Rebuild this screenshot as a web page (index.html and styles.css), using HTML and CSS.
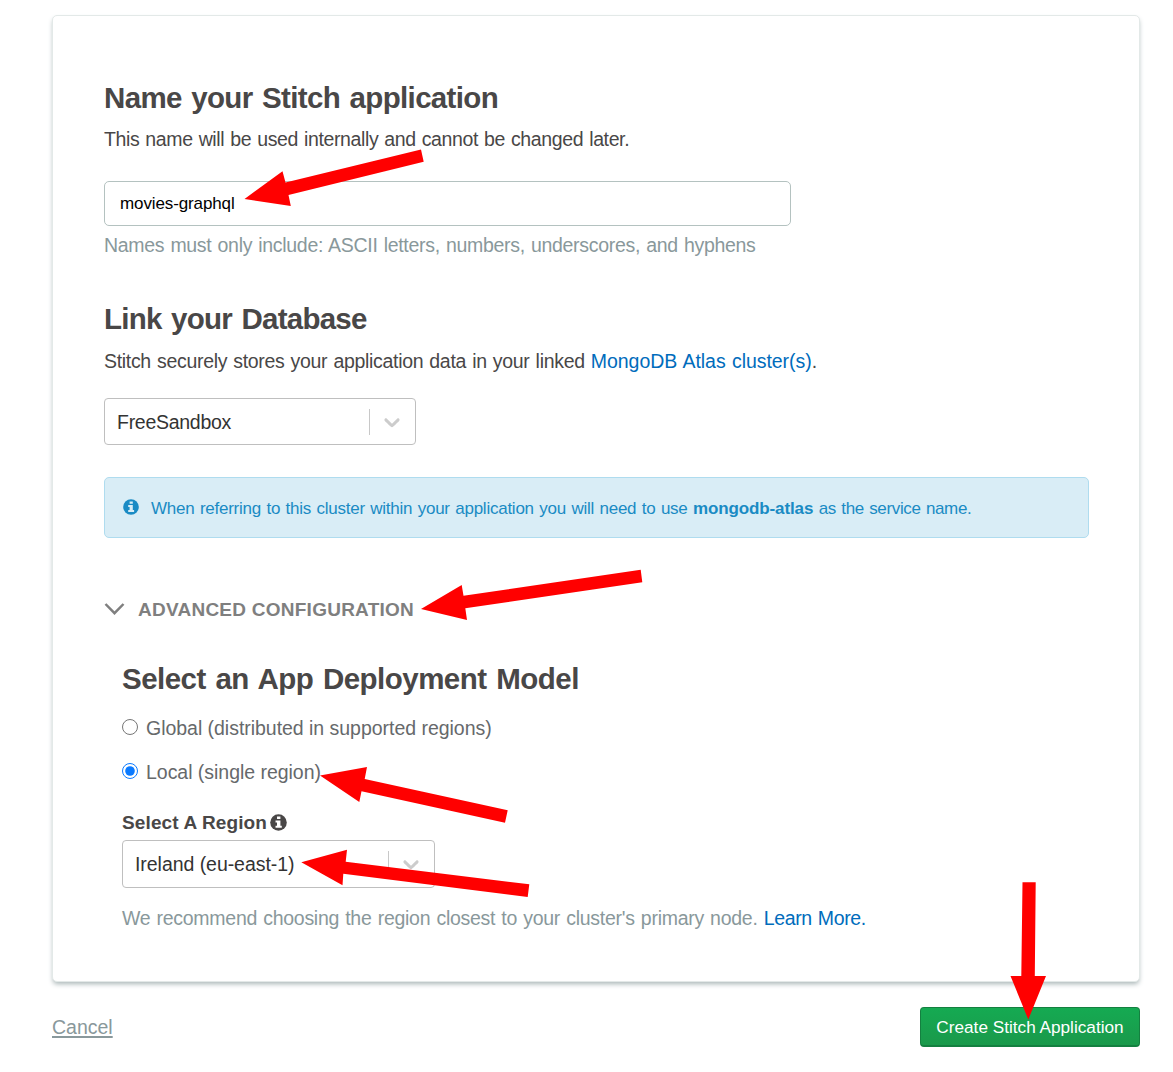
FILE: index.html
```html
<!DOCTYPE html>
<html lang="en">
<head>
<meta charset="utf-8">
<title>Create Stitch Application</title>
<link rel="stylesheet" href="styles.css">
</head>
<body>
<main class="page">
  <form class="card">
    <section class="name-section">
      <h1 class="heading heading-name">Name your Stitch application</h1>
      <p class="lead lead-name">This name will be used internally and cannot be changed later.</p>
      <input class="name-input" type="text" value="movies-graphql" aria-label="Application name">
      <p class="hint">Names must only include: ASCII letters, numbers, underscores, and hyphens</p>
    </section>

    <section class="link-section">
      <h2 class="heading heading-link">Link your Database</h2>
      <p class="lead lead-link">Stitch securely stores your application data in your linked <a class="link atlas-link">MongoDB Atlas cluster(s)</a>.</p>
      <div class="select">
        <span class="select-value cluster-value">FreeSandbox</span>
        <span class="select-divider"></span>
        <svg class="select-arrow" width="26" height="26" viewBox="0 0 20 20"><path d="M4.516 7.548c0.436-0.446 1.043-0.481 1.576 0l3.908 3.747 3.908-3.747c0.533-0.481 1.141-0.446 1.574 0 0.436 0.445 0.408 1.197 0 1.615-0.406 0.418-4.695 4.502-4.695 4.502-0.217 0.223-0.502 0.335-0.787 0.335s-0.57-0.112-0.789-0.335c0 0-4.287-4.084-4.695-4.502s-0.436-1.17 0-1.615z"/></svg>
      </div>
      <div class="alert">
        <svg class="info-icon alert-icon" width="16" height="16" viewBox="0 0 16 16"><circle cx="8" cy="8" r="7.8" fill="currentColor"/><path fill="#d9edf6" d="M6.6 2.4h3.2v2.3H6.6zM5.2 6h4.6v5h1.3v2H5.2v-2h1.4V8H5.2z"/></svg>
        <p class="alert-text">When referring to this cluster within your application you will need to use <strong>mongodb-atlas</strong> <span class="alert-tail">as the service name.</span></p>
      </div>
    </section>

    <div class="advanced-toggle">
      <svg width="21" height="14" viewBox="0 0 21 14"><path d="M1.5 2 10.5 11.2 19.5 2" fill="none" stroke="#7f7f7f" stroke-width="2.5"/></svg>
      <span class="advanced-title">ADVANCED CONFIGURATION</span>
    </div>

    <section class="advanced">
      <h2 class="heading heading-model">Select an App Deployment Model</h2>
      <label class="option"><input class="radio" type="radio" name="model"><span>Global (distributed in supported regions)</span></label>
      <label class="option"><input class="radio" type="radio" name="model" checked><span>Local (single region)</span></label>
      <div class="region-label"><span class="region-title">Select A Region</span>
        <svg class="info-icon" width="17" height="17" viewBox="0 0 16 16"><circle cx="8" cy="8" r="7.8" fill="currentColor"/><path fill="#fff" d="M6.6 2.4h3.2v2.3H6.6zM5.2 6h4.6v5h1.3v2H5.2v-2h1.4V8H5.2z"/></svg>
      </div>
      <div class="select region-select">
        <span class="select-value">Ireland (eu-east-1)</span>
        <span class="select-divider"></span>
        <svg class="select-arrow" width="26" height="26" viewBox="0 0 20 20"><path d="M4.516 7.548c0.436-0.446 1.043-0.481 1.576 0l3.908 3.747 3.908-3.747c0.533-0.481 1.141-0.446 1.574 0 0.436 0.445 0.408 1.197 0 1.615-0.406 0.418-4.695 4.502-4.695 4.502-0.217 0.223-0.502 0.335-0.787 0.335s-0.57-0.112-0.789-0.335c0 0-4.287-4.084-4.695-4.502s-0.436-1.17 0-1.615z"/></svg>
      </div>
      <p class="recommend">We recommend choosing the region closest to your cluster's primary node. <a class="link learn-link">Learn More.</a></p>
    </section>
  </form>

  <footer class="actions">
    <a class="cancel">Cancel</a>
    <button class="create" type="button">Create Stitch Application</button>
  </footer>
</main>

<svg class="arrows" width="1173" height="1072" viewBox="0 0 1173 1072" fill="#f00">
  <path d="M244.5 199 282.5 171.3 285.5 182.5 421 149.5 423.7 161.7 288.5 195 290.8 206z"/>
  <path d="M421 609 461.7 585 463.5 595.7 640.7 569.7 642.3 582.3 465.3 608.3 467 620z"/>
  <path d="M320 775.5 367 767 364.7 779 507.7 810.3 505 822.7 361.5 791.3 359.3 802z"/>
  <path d="M301.3 862.3 347 849.7 345.7 861.7 529.3 884.3 527.7 897 343.3 873.7 342.5 885.3z"/>
  <path d="M1028.3 1019.5 1010.5 976H1021.3L1022.5 882.3H1035.7L1034.8 976H1046z"/>
</svg>
</body>
</html>
```

FILE: styles.css
```css
* {
  box-sizing: border-box;
}

body {
  margin: 0;
  background: #fff;
  color: #494747;
  font-family: "Liberation Sans", Arial, sans-serif;
  font-size: 19.5px;
  line-height: 28px;
}

h1, h2, p {
  margin: 0;
}

p {
  word-spacing: 1px;
}

.page {
  height: 1072px;
  padding: 15px 33px 0 52px;
  overflow: hidden;
}

.card {
  height: 967px;
  padding: 62px 50px 0 51px;
  border: 1px solid #e3e9e8;
  border-radius: 5px;
  background: #fff;
  box-shadow: 0 3px 5px -1px #a9b6b7;
}

.heading {
  font-size: 29.5px;
  font-weight: 700;
  line-height: 40px;
  word-spacing: 2px;
}

.heading-name { letter-spacing: -0.66px; }
.heading-link { letter-spacing: -0.75px; }
.heading-model { letter-spacing: -0.52px; }

.lead-name {
  margin-top: 7px;
  letter-spacing: -0.38px;
}

.name-input {
  display: block;
  width: 687px;
  height: 45px;
  margin-top: 28px;
  padding: 1px 15px 0;
  border: 1px solid #b4c2c0;
  border-radius: 5px;
  color: #000;
  background: #fff;
  font: 17px "Liberation Sans", Arial, sans-serif;
  letter-spacing: -0.12px;
}

.hint {
  margin-top: 5px;
  color: #89989b;
  letter-spacing: -0.3px;
}

.link-section {
  margin-top: 40px;
}

.lead-link {
  margin-top: 8px;
  letter-spacing: -0.31px;
}

.link {
  color: #006cbc;
}

.atlas-link {
  letter-spacing: -0.05px;
}

.select {
  display: flex;
  align-items: center;
  width: 312px;
  height: 47px;
  margin-top: 23px;
  padding: 0 10px 0 12px;
  border: 1px solid #bfbfbf;
  border-radius: 4px;
  background: #fff;
  color: #333;
}

.select-value {
  flex: 1;
  letter-spacing: -0.05px;
}

.cluster-value {
  letter-spacing: -0.28px;
}

.select-divider {
  width: 1px;
  height: 26px;
  margin-right: 9px;
  background: #c8c8c8;
}

.select-arrow {
  fill: #ccc;
}

.alert {
  display: flex;
  align-items: center;
  height: 61px;
  margin-top: 32px;
  padding: 0 18px;
  border: 1px solid #afdcef;
  border-radius: 5px;
  background: #d9edf6;
  color: #1a8bc4;
}

.info-icon {
  display: block;
  flex: none;
}

.alert-icon {
  margin-bottom: 2px;
}

.alert-text {
  margin: 2px 0 0 12px;
  font-size: 17px;
  letter-spacing: -0.25px;
  white-space: nowrap;
}

.alert-text strong {
  letter-spacing: -0.13px;
}

.alert-tail {
  letter-spacing: -0.36px;
}

.advanced-toggle {
  display: flex;
  align-items: center;
  gap: 13px;
  margin-top: 57px;
  color: #7f7f7f;
  font-size: 19px;
  font-weight: 700;
  letter-spacing: 0.25px;
}

.advanced-title,
.region-title {
  padding-top: 2px;
  line-height: 26px;
}

.advanced {
  margin-top: 36px;
  padding-left: 18px;
}

.option {
  display: flex;
  align-items: center;
  gap: 8px;
  margin-top: 16px;
  color: #66696b;
  letter-spacing: -0.03px;
}

.heading-model + .option {
  margin-top: 15px;
}

.radio {
  width: 16px;
  height: 16px;
  margin: 0 0 2px;
  accent-color: #0a7aff;
}

.region-label {
  display: flex;
  align-items: center;
  gap: 3px;
  margin-top: 22px;
  font-size: 19px;
  font-weight: 700;
  letter-spacing: 0.12px;
}

.region-select {
  width: 313px;
  height: 48px;
  margin-top: 4px;
}

.recommend {
  margin-top: 16px;
  color: #89989b;
  letter-spacing: -0.27px;
}

.learn-link {
  letter-spacing: -0.36px;
}

.actions {
  display: flex;
  align-items: center;
  justify-content: space-between;
  height: 40px;
  margin-top: 25px;
}

.cancel {
  color: #89989b;
  text-decoration: underline;
  text-decoration-thickness: 2px;
  text-underline-offset: 2px;
}

.create {
  width: 220px;
  height: 40px;
  padding: 2px 0 0;
  border: 1px solid #148040;
  border-bottom-width: 2px;
  border-radius: 4px;
  background: linear-gradient(#15aa52, #1a994b);
  color: #fff;
  font: 17.2px "Liberation Sans", Arial, sans-serif;
}

/* Hand-drawn pointers laid over the form */
.arrows {
  position: absolute;
  top: 0;
  left: 0;
  pointer-events: none;
}
```
